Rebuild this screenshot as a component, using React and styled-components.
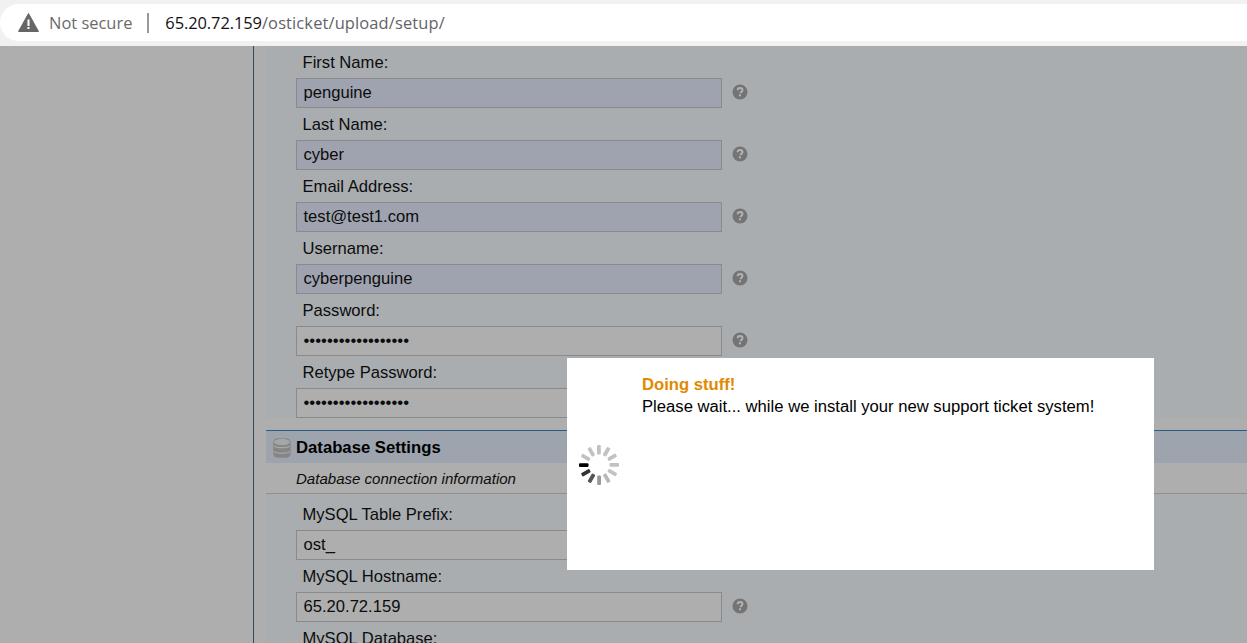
import React from "react";
import styled, { createGlobalStyle } from "styled-components";

const Global = createGlobalStyle`
  html, body { margin: 0; padding: 0; height: 100%; overflow: hidden; background: #aeaeae; }
  #root { height: 643px; overflow: hidden; }
`;
const Shell = styled.div`
  position: relative; width: 1247px; height: 643px; overflow: hidden;
  display: flex; flex-direction: column;
  font-family: "Liberation Sans", Arial, sans-serif; color: #000;
`;
const BrowserBar = styled.header`
  flex: none; height: 46px; box-sizing: border-box; background: #f1f1f1; padding: 4px 0 5px;
`;
const Omnibox = styled.div`
  height: 37px; background: #fff; border-radius: 19px 0 0 19px;
  display: flex; align-items: center; padding-left: 18px; box-sizing: border-box;
  font-family: "Open Sans", sans-serif; font-size: 16.45px; color: #5f6368;
`;
const Secure = styled.span` margin-left: 10px; color: #6a6a6a; `;
const Divider = styled.span` width: 2px; height: 20px; background: #9a9a9a; margin: 0 16px 0 15px; `;
const Host = styled.span` color: #111; letter-spacing: -0.08px; `;
const UrlPath = styled.span` letter-spacing: 0.13px; `;
const PageArea = styled.main`
  flex: 1; min-height: 0; background: #aeaeae; padding-left: 253px; display: flex;
`;
const Content = styled.div`
  flex: 1; border-left: 1px solid #2c4a68; padding-left: 12px; overflow: hidden;
`;
const Rows = styled.div`
  background: #a9adb0; padding-left: 30px; padding-top: ${p => (p.$lead ? "4px" : "0")};
`;
const Row = styled.div` display: flex; flex-direction: column; `;
const Label = styled.label`
  height: 32px; line-height: 33px; padding-left: 6.5px; font-size: 16.6px; color: #0c0c0c;
`;
const FieldLine = styled.div` display: flex; align-items: center; height: 30px; `;
const Field = styled.div`
  width: 426px; height: 30px; box-sizing: border-box; border: 1px solid #8a8a8a;
  background: ${p => (p.$auto ? "#9fa3b0" : "#aeaeae")};
  padding-left: 6.5px; line-height: 28px; font-size: 16.6px; color: #0c0c0c;
  white-space: nowrap; overflow: hidden;
`;
const Dots = styled.span` font-size: 16.75px; `;
const Help = styled.svg` width: 16px; height: 16px; margin: -2px 0 0 10px; `;
const Gap = styled.div` height: 12px; `;
const SectionHead = styled.h2`
  margin: 0; height: 33px; box-sizing: border-box; border-top: 1px solid #2c5a8c; background: #9da4ad;
  display: flex; align-items: center; padding: 1px 0 0 7px; font-size: 16.7px; font-weight: bold; color: #000;
`;
const DbIcon = styled.svg` flex: none; width: 18px; height: 20px; margin-right: 5px; `;
const SectionSub = styled.div`
  height: 31px; box-sizing: border-box; border-bottom: 1px solid #8f8f8f; line-height: 31px;
  padding-left: 30px; font-size: 15.05px; font-style: italic; color: #0c0c0c; background: #aeaeae;
`;
const Modal = styled.section`
  position: absolute; left: 567px; top: 358px; width: 587px; height: 212px; background: #fff;
`;
const ModalText = styled.div` padding: 16px 0 0 75px; font-size: 16.65px; line-height: 22px; color: #000; `;
const ModalTitle = styled.div` font-weight: bold; color: #e08a00; `;
const Spinner = styled.svg` position: absolute; left: 10px; top: 85px; width: 44px; height: 44px; `;

const HelpIcon = () => (
  <Help viewBox="0 0 16 16" aria-hidden="true">
    <circle cx="8" cy="8" r="7.5" fill="#747474" />
    <path d="M5.6 6.2C5.7 4.8 6.7 4 8.1 4c1.4 0 2.4.8 2.4 2 0 1-.6 1.5-1.3 2-.5.4-.7.6-.7 1.2" fill="none" stroke="#b4b4b4" strokeWidth="1.9" />
    <rect x="6.9" y="10.3" width="2" height="2" fill="#b4b4b4" />
  </Help>
);

const SPOKES = [
  "#000", "#333", "#555", "#999", "#b8b8b8", "#c2c2c2",
  "#c2c2c2", "#c2c2c2", "#c2c2c2", "#c2c2c2", "#c2c2c2", "#c2c2c2",
];

const Loader = () => (
  <Spinner viewBox="0 0 44 44" aria-hidden="true">
    {SPOKES.map((c, i) => (
      <rect key={i} x="2" y="20.2" width="9.5" height="3.8" rx="1" fill={c}
        transform={`rotate(${-30 * i} 22 22)`} />
    ))}
  </Spinner>
);

const FieldRow = ({ label, value, auto, secret }) => (
  <Row>
    <Label>{label}</Label>
    <FieldLine>
      <Field $auto={auto}>{secret ? <Dots>{"•".repeat(18)}</Dots> : value}</Field>
      <HelpIcon />
    </FieldLine>
  </Row>
);

export default function App() {
  return (
    <Shell>
      <Global />
      <BrowserBar>
        <Omnibox>
          <svg width="21" height="19" viewBox="0 0 21 19" aria-hidden="true">
            <path d="M10.5 0.5 L20.5 18.5 H0.5 Z" fill="#666" stroke="#666" strokeLinejoin="round" />
            <rect x="9.5" y="6.5" width="2" height="6.5" fill="#fff" />
            <rect x="9.5" y="14" width="2" height="2" fill="#fff" />
          </svg>
          <Secure>Not secure</Secure>
          <Divider />
          <span><Host>65.20.72.159</Host><UrlPath>/osticket/upload/setup/</UrlPath></span>
        </Omnibox>
      </BrowserBar>
      <PageArea>
        <Content>
          <Rows>
            <FieldRow label="First Name:" value="penguine" auto />
            <FieldRow label="Last Name:" value="cyber" auto />
            <FieldRow label="Email Address:" value="test@test1.com" auto />
            <FieldRow label="Username:" value="cyberpenguine" auto />
            <FieldRow label="Password:" secret />
            <FieldRow label="Retype Password:" secret />
          </Rows>
          <Gap />
          <SectionHead>
            <DbIcon viewBox="0 0 18 20" aria-hidden="true">
              <rect x="0.25" y="0.25" width="17.5" height="19.5" rx="4.5" fill="#858585" />
              <ellipse cx="9" cy="4" rx="8" ry="3.2" fill="#a6a6a6" />
              <path d="M0.8 8c3 2.2 13.4 2.2 16.4 0M0.8 13.5c3 2.2 13.4 2.2 16.4 0" fill="none" stroke="#a8a8a8" strokeWidth="1.1" />
            </DbIcon>
            Database Settings
          </SectionHead>
          <SectionSub>Database connection information</SectionSub>
          <Rows $lead>
            <FieldRow label="MySQL Table Prefix:" value="ost_" />
            <FieldRow label="MySQL Hostname:" value="65.20.72.159" />
            <Label>MySQL Database:</Label>
          </Rows>
        </Content>
      </PageArea>
      <Modal>
        <ModalText>
          <ModalTitle>Doing stuff!</ModalTitle>
          Please wait... while we install your new support ticket system!
        </ModalText>
        <Loader />
      </Modal>
    </Shell>
  );
}
